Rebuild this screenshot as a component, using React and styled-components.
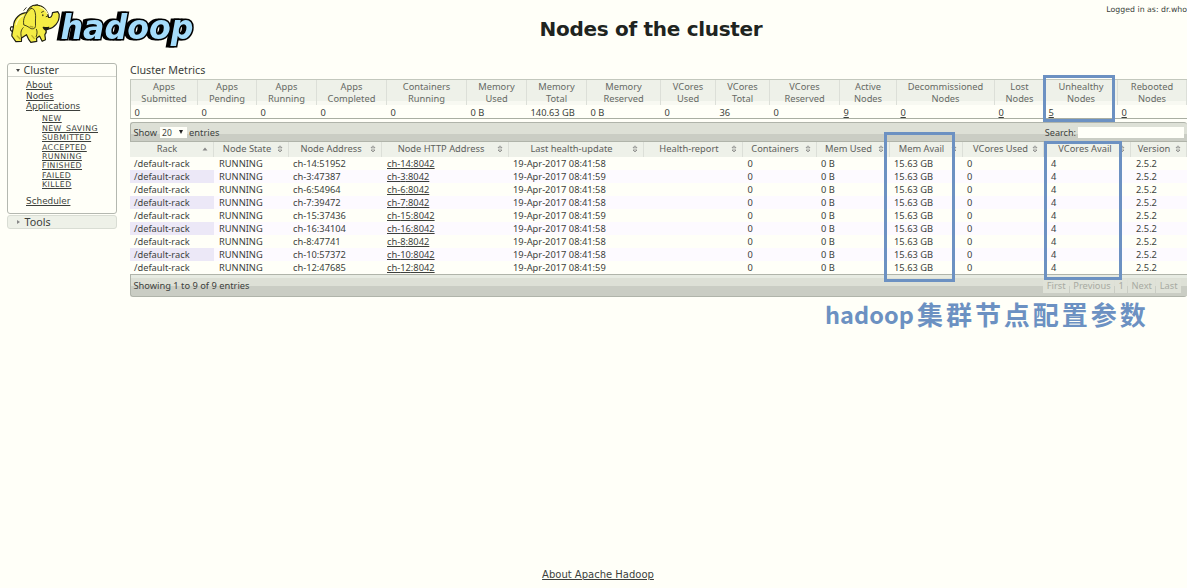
import React from "react";
import styled, { createGlobalStyle } from "styled-components";

const Global = createGlobalStyle`
  *{box-sizing:border-box}
  html,body{margin:0;background:#fffff8;overflow:hidden}
  body{font-family:"Noto Sans",sans-serif;font-size:9.3px;color:#3c3f3c}
`;
const Page = styled.div`position:relative;width:1187px;height:588px;display:flex;flex-direction:column;`;
const Header = styled.header`height:63px;display:grid;grid-template-columns:210px 882px 95px;`;
const Title = styled.h1`margin:0;padding-top:16px;text-align:center;font:bold 20px/27px "DejaVu Sans",sans-serif;letter-spacing:-.3px;color:#20241f;`;
const User = styled.div`padding-top:4px;text-align:right;white-space:nowrap;font:7.8px/11px "DejaVu Sans",sans-serif;`;
const Body = styled.div`flex:1;display:flex;`;
const Sidebar = styled.nav`flex:0 0 130px;padding-left:7px;`;
const Panel = styled.section`width:110px;height:151px;border:1px solid #b4b8b0;border-radius:3px;`;
const PanelHead = styled.div`height:${p => p.$open ? 13 : 12}px;line-height:12px;font-size:10.7px;padding-left:8px;display:flex;align-items:center;gap:3.5px;border-bottom:${p => p.$open ? "1px solid #d4d6cf" : "0"};`;
const Tools = styled.section`width:110px;height:14px;margin-top:1px;border:1px solid #d9ddd4;border-radius:3px;background:#eef1e8;`;
const Arrow = styled.i`width:0;height:0;border:2.5px solid transparent;${p => p.$open ? "border-top:3px solid #444;border-bottom:0;" : "border-left:3px solid #888;border-right:0;margin-right:1px;margin-left:1px;"}`;
const Links = styled.div`display:flex;flex-direction:column;align-items:flex-start;padding:3px 0 0 18px;`;
const NavLink = styled.a`text-decoration:underline;font:8.9px/10.6px "DejaVu Sans",sans-serif;`;
const SubLinks = styled.div`display:flex;flex-direction:column;align-items:flex-start;padding:2.5px 0 6.5px 16px;`;
const SubLink = styled.a`text-decoration:underline;letter-spacing:.42px;font:7.8px/9.4px "DejaVu Sans",sans-serif;`;
const Main = styled.main`flex:0 0 1057px;`;
const Section = styled.h2`margin:0;height:16px;font:10.7px/14px "Noto Sans",sans-serif;`;
const Metrics = styled.div`display:grid;grid-template-columns:67px 59px 60px 70px 80px 60px 60px 74px 55px 54px 70px 57px 98px 50px 73px 69px;grid-template-rows:25px 14px;border:1px solid #c3c8bd;border-right:0;border-bottom-color:#a9aea2;height:40px;`;
const MetricHead = styled.div`text-align:center;line-height:12px;padding-top:1px;color:#666964;border-right:1px solid #dcdfd8;background:linear-gradient(#eef1e9 21px,#f8f9f2 21px);white-space:pre;`;
const Metric = styled.div`padding-left:3.5px;line-height:15px;text-decoration:${p => p.$link ? "underline" : "none"};`;
const Bar = styled.div`display:flex;align-items:center;height:${p => p.$foot ? 23 : 20}px;padding-left:2.5px;border:1px solid #b0b4aa;border-right:0;
  background:${p => p.$foot ? "linear-gradient(#e7ebe2 3px,#dde0d6 3px,#dde0d6 11px,#cacdc4 11px)" : "linear-gradient(#dde0d6 11px,#cacdc4 11px)"};
  margin-top:${p => p.$foot ? 0 : 3}px;border-radius:${p => p.$foot ? "0 0 3px 3px" : "3px 3px 0 0"};`;
const Select = styled.span`width:27px;height:11px;margin:0 2.5px;padding:0 4px 0 2.5px;background:#fffff8;display:flex;align-items:center;justify-content:space-between;font-size:8.5px;`;
const Down = styled.i`border:2.5px solid transparent;border-top:4px solid #222;border-bottom:0;`;
const Search = styled.label`margin-left:auto;display:flex;align-items:center;gap:2px;padding-right:3px;font-size:9.1px;`;
const Input = styled.span`width:106px;height:11px;background:#fffff8;`;
const cols = "84px 75px 93px 127px 135px 99px 74px 73px 73px 81px 87px 56px";
const HeadRow = styled.div`display:grid;grid-template-columns:${cols};height:14.5px;`;
const HeadCell = styled.div`display:flex;align-items:center;background:#eef1e9;border-right:1px solid #dcdfd8;color:#5d605b;white-space:nowrap;padding-right:5px;line-height:14px;`;
const HeadText = styled.span`flex:1;text-align:center;padding-left:${p => p.$shift || 2}px;`;
const Row = styled.div`display:grid;grid-template-columns:${cols};height:13.1px;background:${p => p.$odd ? "#fdfaff" : "transparent"};`;
const Cell = styled.div`padding-left:${p => p.$pad || 4}px;line-height:13px;white-space:nowrap;text-decoration:${p => p.$link ? "underline" : "none"};background:${p => p.$sorted ? "#ece8f7" : "transparent"};`;
const Pager = styled.div`margin-left:auto;display:flex;gap:1px;margin-right:6px;color:#a7aaa2;`;
const PageBtn = styled.span`padding:0 3.4px;height:14px;line-height:13px;background:#dfe2d8;`;
const Footer = styled.footer`height:21px;padding-left:9px;text-align:center;font:10px/15px "DejaVu Sans",sans-serif;`;
const About = styled.a`text-decoration:underline;`;
const Mark = styled.div`position:absolute;left:${p => p.$x}px;top:${p => p.$y}px;width:${p => p.$w}px;height:${p => p.$h}px;border:3px solid #6c91c2;`;
const Note = styled.div`position:absolute;left:825px;top:295px;display:flex;white-space:nowrap;color:#6c91c2;font:bold 26px/38px "Noto Sans CJK SC",sans-serif;`;
const NoteLatin = styled.span`width:92px;font-size:23.5px;letter-spacing:.05px;`;
const NoteCjk = styled.span`letter-spacing:2.95px;font-weight:600;`;
const Wordmark = styled.text`font:italic bold 31px "DejaVu Sans",sans-serif;fill:#a4dcfb;stroke:#000;stroke-width:3px;stroke-miterlimit:3;paint-order:stroke;filter:drop-shadow(-2.2px .8px 0 #000);`;

const metrics = [["Apps\nSubmitted","0"],["Apps\nPending","0"],["Apps\nRunning","0"],["Apps\nCompleted","0"],["Containers\nRunning","0"],["Memory\nUsed","0 B"],["Memory\nTotal","140.63 GB"],["Memory\nReserved","0 B"],["VCores\nUsed","0"],["VCores\nTotal","36"],["VCores\nReserved","0"],["Active\nNodes","9",1],["Decommissioned\nNodes","0",1],["Lost\nNodes","0",1],["Unhealthy\nNodes","5",1],["Rebooted\nNodes","0",1]];
const heads = ["Rack","Node State","Node Address","Node HTTP Address","Last health-update","Health-report","Containers","Mem Used","Mem Avail","VCores Used","VCores Avail","Version"];
const shifts = [2,3,3,3,2,3,2,2,2,6,7,2];
const nodes = [["14","51952",8],["3","47387",9],["6","54964",8],["7","39472",8],["15","37436",9],["16","34104",8],["8","47741",8],["10","57372",8],["12","47685",9]];

const Sort = ({ up }) => <svg width="6" height="8" viewBox="0 0 6 8" fill="none" stroke="#777">{up ? <path d="M.5 5.500 3 2.500l2.500 3z" fill="#888" stroke="none"/> : <path d="M1 2.800 3 .8 5 2.800zM1 5l2 2 2-2z" strokeWidth=".7"/>}</svg>;

const Logo = () => (
  <svg width="210" height="60" viewBox="0 0 210 60">
    <g transform="translate(3.5 0) scale(.3333)" stroke="#1d1d12" strokeWidth="3.500" strokeLinejoin="round" strokeLinecap="round" fill="#f4ec45">
      <path d="M25 94c-7-4-5-14 1-14l8 4" fill="none"/>
      <path d="M71 38C50 38 31 55 30 78c-1 13-6 23-5 30l12 17 17-1 0-10 15-10 7 15 6 8 18-3-1-9 9-7 8 16 10-5-2-15c5-5 5-10 3-14l8-3c16-3 34-20 32-44l-4-8-16 3c-1 11-5 16-12 14-1-17-12-35-36-37-16-1-24 9-30 23z"/>
      <path d="M83 25C66 39 57 57 61 75c10 2 16 8 22 11 10 2 14-3 13-14-1-12 2-24-1-34-2-9-6-13-12-13z" strokeWidth="2.500"/>
      <path d="M119 82c3 7 8 10 14 6l3-6c-6 2-11 1-17 0z" fill="#1d1d12"/>
      <path d="M59 83c-8 8-8 18-5 31M99 88c3 7 2 14-1 22M114 37l6-3M128 50l5-2M61 31l7-8M94 17l8-3" fill="none" strokeWidth="2.500"/>
      <path d="M38 74c4-15 11-24 21-27M110 22c12 3 18 10 22 19" fill="none" stroke="#fffbb0" strokeWidth="4"/>
      <path d="M41 108l9 9M85 107l7 8M80 79l8 2" fill="none" stroke="#b5a92b" strokeWidth="4"/>
      <ellipse cx="118" cy="46" rx="2" ry="3" fill="#1d1d12" stroke="none"/>
    </g>
    <g transform="translate(0 39) scale(1 1.080)">
      <Wordmark x="60.500" y="0" textLength="133" lengthAdjust="spacingAndGlyphs">hadoop</Wordmark>
    </g>
  </svg>
);

export default function App() {
  return <Page><Global/>
    <Header><Logo/><Title>Nodes of the cluster</Title><User>Logged in as: dr.who</User></Header>
    <Body>
      <Sidebar>
        <Panel><PanelHead $open><Arrow $open/>Cluster</PanelHead>
          <Links><NavLink>About</NavLink><NavLink>Nodes</NavLink><NavLink>Applications</NavLink>
            <SubLinks>{["NEW","NEW_SAVING","SUBMITTED","ACCEPTED","RUNNING","FINISHED","FAILED","KILLED"].map(s => <SubLink key={s}>{s}</SubLink>)}</SubLinks>
            <NavLink>Scheduler</NavLink></Links>
        </Panel>
        <Tools><PanelHead><Arrow/>Tools</PanelHead></Tools>
      </Sidebar>
      <Main>
        <Section>Cluster Metrics</Section>
        <Metrics>{metrics.map(m => <MetricHead key={m[0]}>{m[0]}</MetricHead>)}{metrics.map(m => <Metric key={m[0]} $link={m[2]}>{m[1]}</Metric>)}</Metrics>
        <Bar>Show<Select>20<Down/></Select>entries<Search>Search:<Input/></Search></Bar>
        <HeadRow>{heads.map((h, i) => <HeadCell key={h}><HeadText $shift={shifts[i]}>{h}</HeadText><Sort up={!i}/></HeadCell>)}</HeadRow>
        {nodes.map(([n, port, s], i) => <Row key={n} $odd={i % 2}>
          <Cell $sorted={i % 2}>/default-rack</Cell><Cell $pad={5}>RUNNING</Cell><Cell>ch-{n}:{port}</Cell><Cell $pad={5} $link>ch-{n}:8042</Cell>
          <Cell>19-Apr-2017 08:41:5{s}</Cell><Cell/><Cell $pad={4.5}>0</Cell><Cell>0 B</Cell><Cell>15.63 GB</Cell><Cell>0</Cell><Cell $pad={7}>4</Cell><Cell $pad={5}>2.5.2</Cell>
        </Row>)}
        <Bar $foot>Showing 1 to 9 of 9 entries<Pager>{["First","Previous","1","Next","Last"].map(t => <PageBtn key={t}>{t}</PageBtn>)}</Pager></Bar>
      </Main>
    </Body>
    <Footer><About>About Apache Hadoop</About></Footer>
    <Mark $x={1043} $y={75} $w={72} $h={47}/><Mark $x={884} $y={132} $w={71} $h={150}/><Mark $x={1044} $y={141} $w={78} $h={139}/>
    <Note><NoteLatin>hadoop</NoteLatin><NoteCjk>集群节点配置参数</NoteCjk></Note>
  </Page>;
}
